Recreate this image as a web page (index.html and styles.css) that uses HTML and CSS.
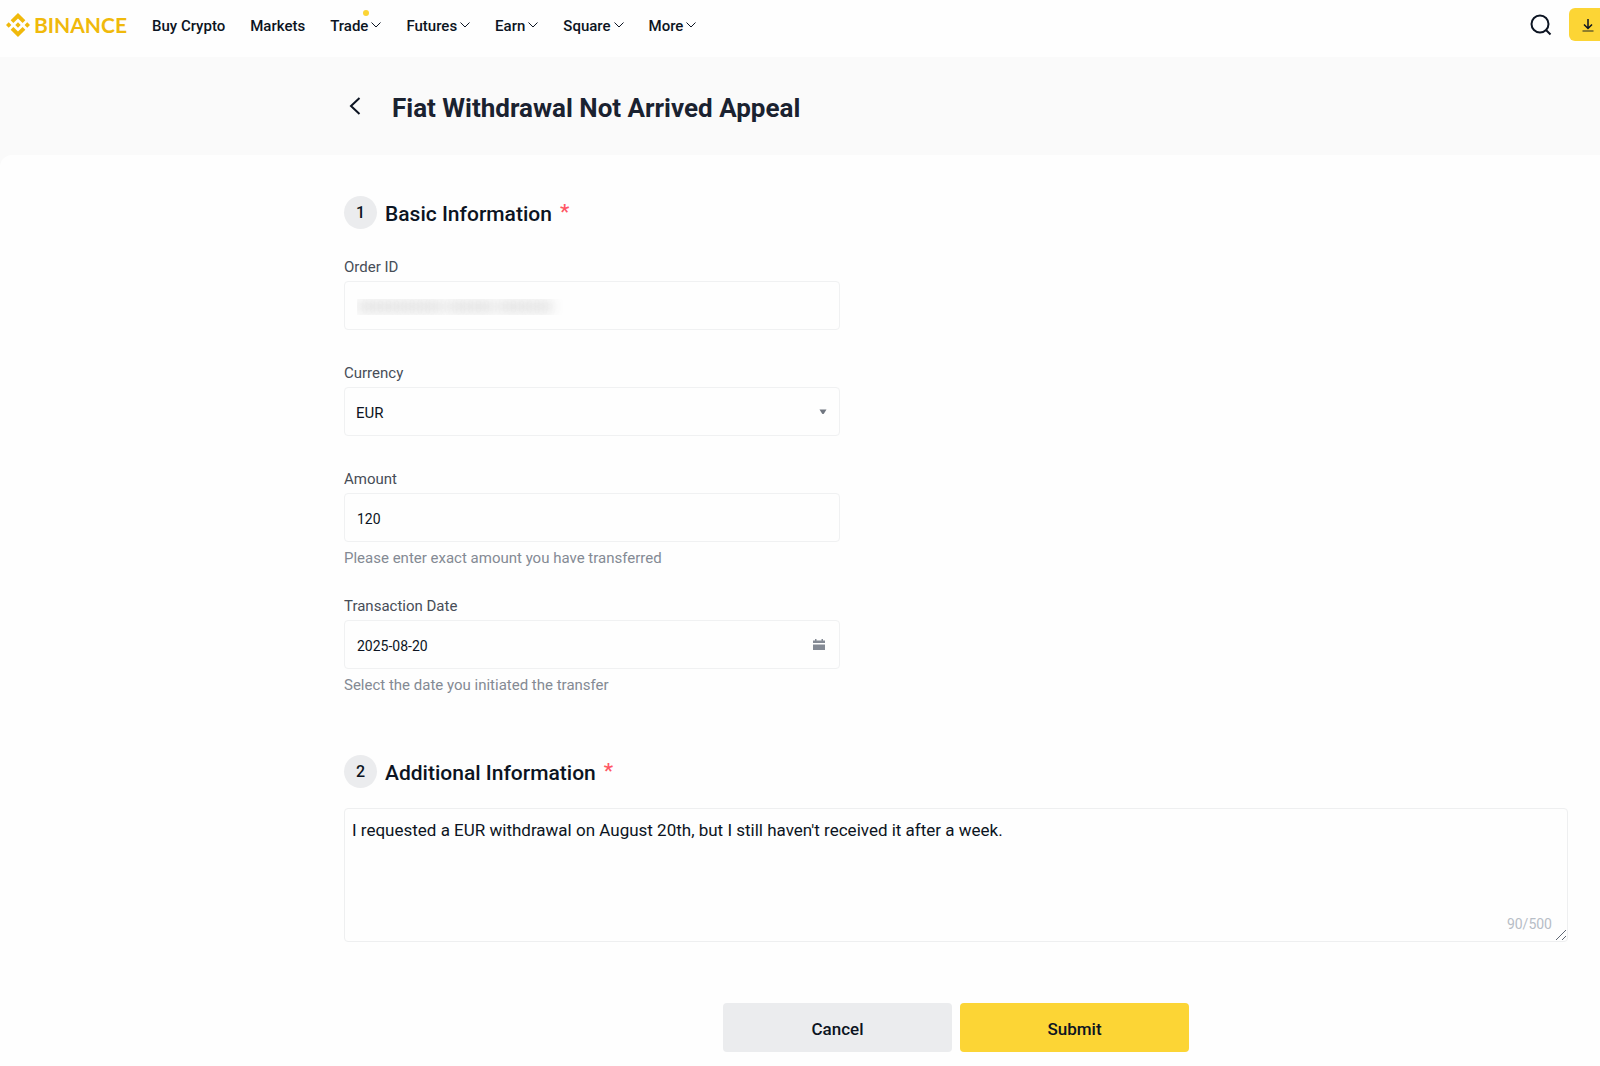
FILE: index.html
```
<!DOCTYPE html>
<html lang="en">
<head>
  <meta charset="UTF-8" />
  <meta name="viewport" content="width=device-width, initial-scale=1" />
  <title>Fiat Withdrawal Not Arrived Appeal | Binance</title>
  <link rel="stylesheet" href="styles.css">
</head>
<body>

<header class="header">
  <a class="logo" href="#">
    <svg class="logo-mark" viewBox="0 0 24 24" aria-hidden="true"><path fill="currentColor" d="M16.624 13.9202l2.7175 2.7154-7.353 7.353-7.353-7.352 2.7175-2.7164 4.6355 4.6595 4.6356-4.6595zm4.6366-4.6366L24 12l-2.7154 2.7164L18.5682 12l2.6924-2.7164zm-9.272.001l2.7163 2.6914-2.7164 2.7174v-.001L9.2721 12l2.7164-2.7154zm-9.2722-.001L5.4088 12l-2.6914 2.6924L0 12l2.7164-2.7164zM11.9885.0115l7.353 7.329-2.7174 2.7154-4.6356-4.6356-4.6355 4.6595-2.7174-2.7154 7.353-7.353z"/></svg>
    <span>BINANCE</span>
  </a>

  <nav class="nav">
    <a href="#">Buy Crypto</a>
    <a href="#">Markets</a>
    <a href="#" class="has-dot">Trade <svg class="chevron" viewBox="0 0 10 10"><path d="M0.5 1.5 5 6l4.500-4.500"/></svg></a>
    <a href="#">Futures <svg class="chevron" viewBox="0 0 10 10"><path d="M0.5 1.5 5 6l4.500-4.500"/></svg></a>
    <a href="#">Earn <svg class="chevron" viewBox="0 0 10 10"><path d="M0.5 1.5 5 6l4.500-4.500"/></svg></a>
    <a href="#">Square <svg class="chevron" viewBox="0 0 10 10"><path d="M0.5 1.5 5 6l4.500-4.500"/></svg></a>
    <a href="#">More <svg class="chevron" viewBox="0 0 10 10"><path d="M0.5 1.5 5 6l4.500-4.500"/></svg></a>
  </nav>

  <div class="header-actions">
    <button class="search-btn" type="button" aria-label="Search">
      <svg viewBox="0 0 22 22"><circle cx="10" cy="10" r="8.500"/><path d="M16 16l4.500 4.500"/></svg>
    </button>
    <button class="download-btn" type="button" aria-label="Download">
      <svg viewBox="0 0 16 16"><path d="M8 2v9M4 7.500l4 4 4-4"/><path class="tray" d="M2.500 14h11"/></svg>
    </button>
  </div>
</header>

<main class="page">
  <div class="title-bar">
    <button class="back-btn" type="button" aria-label="Back">
      <svg viewBox="0 0 12 18"><path d="M10.500 1 2 9l8.500 8"/></svg>
    </button>
    <h1>Fiat Withdrawal Not Arrived Appeal</h1>
  </div>

  <form class="card">
    <section class="basic">
      <h2><span class="step">1</span><span class="section-name">Basic Information</span> <span class="required">*</span></h2>

      <div class="field">
        <label for="orderId">Order ID</label>
        <input class="control masked" type="text" id="orderId" value="00000000000 000000 0000000" readonly />
      </div>

      <div class="field">
        <label for="currency">Currency</label>
        <div class="control-wrap">
          <select class="control" id="currency">
            <option>EUR</option>
          </select>
          <svg class="caret" viewBox="0 0 8 6"><path d="M0.500 0.500h7L5 4.500q-1 1-2 0z"/></svg>
        </div>
      </div>

      <div class="field">
        <label for="amount">Amount</label>
        <input class="control" type="text" id="amount" value="120" />
        <p class="hint">Please enter exact amount you have transferred</p>
      </div>

      <div class="field">
        <label for="date">Transaction Date</label>
        <div class="control-wrap">
          <input class="control" type="text" id="date" value="2025-08-20" />
          <svg class="calendar" viewBox="0 0 12 12"><path d="M0 1.500h2V0h1.500v1.500h5V0H10v1.500h2v2.500H0zM0 5.500h12V11H0z"/></svg>
        </div>
        <p class="hint">Select the date you initiated the transfer</p>
      </div>
    </section>

    <section class="additional">
      <h2><span class="step">2</span><label class="section-name" for="details">Additional Information</label> <span class="required">*</span></h2>
      <div class="textarea-wrap">
        <textarea id="details" maxlength="500">I requested a EUR withdrawal on August 20th, but I still haven't received it after a week.</textarea>
        <span class="counter">90/500</span>
        <svg class="grip" viewBox="0 0 12 12"><path d="M1 11 11 1M7 11l4-4"/></svg>
      </div>
    </section>

    <div class="actions">
      <button class="btn btn-cancel" type="button">Cancel</button>
      <button class="btn btn-submit" type="submit">Submit</button>
    </div>
  </form>
</main>

</body>
</html>
```
FILE: styles.css
```
* {
  box-sizing: border-box;
}

body {
  margin: 0;
  font-family: Roboto, "Liberation Sans", sans-serif;
  font-size: 15px;
  line-height: 20px;
  color: #0c1422;
  background: #fefefe;
}

button, input, select, textarea {
  font: inherit;
  color: inherit;
}

button {
  border: none;
  padding: 0;
  background: none;
  cursor: pointer;
}

a {
  color: inherit;
  text-decoration: none;
}

svg {
  display: block;
  flex: none;
  fill: none;
  stroke: currentColor;
}

/* header */

.header {
  display: flex;
  align-items: center;
  height: 57px;
  padding: 0 0 8px 6px;
}

.logo {
  display: flex;
  align-items: center;
  gap: 4px;
  width: 146px;
  color: #f0b90b;
  font-family: Lato, sans-serif;
  font-size: 21px;
  font-weight: 700;
}

.logo-mark {
  width: 24px;
  height: 24px;
  stroke: none;
}

.nav {
  display: flex;
  gap: 25px;
  padding-top: 2px;
  font-weight: 500;
}

.nav a {
  display: flex;
  align-items: center;
  gap: 3px;
  position: relative;
}

.chevron {
  width: 10px;
  height: 10px;
}

.has-dot::after {
  content: "";
  position: absolute;
  top: -6px;
  right: 12px;
  width: 6px;
  height: 6px;
  border-radius: 50%;
  background: #fcd535;
}

.header-actions {
  display: flex;
  align-items: center;
  gap: 17px;
  margin-left: auto;
}

.search-btn svg {
  width: 22px;
  height: 22px;
  stroke-width: 2;
}

.download-btn {
  width: 31px;
  height: 33px;
  padding-left: 11px;
  border-radius: 6px 0 0 6px;
  background: #fcd535;
}

.download-btn svg {
  width: 16px;
  height: 16px;
  stroke-width: 1.5;
}

.download-btn .tray {
  opacity: 0.6;
}

/* page */

.page {
  background: #fafafa;
}

.title-bar {
  display: flex;
  align-items: center;
  gap: 31px;
  height: 98px;
  padding: 0 32px 0 349px;
}

.back-btn svg {
  width: 12px;
  height: 18px;
  stroke-width: 2;
}

h1 {
  margin: 0;
  padding-top: 3px;
  font-size: 26px;
  font-weight: 700;
  line-height: 32px;
  color: #1a2230;
}

.card {
  padding: 41px 32px 14px 344px;
  border-radius: 12px 0 0 0;
  background: #fefefe;
}

h2 {
  display: flex;
  align-items: center;
  gap: 8px;
  margin: 0;
  font-size: 21px;
  font-weight: 500;
  line-height: 33px;
}

.step {
  width: 33px;
  height: 33px;
  border-radius: 50%;
  background: #ebecee;
  font-size: 16px;
  text-align: center;
}

.section-name {
  line-height: 29px;
  padding-top: 4px;
}

.required {
  color: #ff5765;
}

.basic {
  max-width: 496px;
}

.basic h2 {
  margin-bottom: 28px;
}

.field {
  margin-bottom: 33px;
}

.field label {
  display: block;
  margin-bottom: 4px;
  color: #474d57;
}

.control-wrap {
  position: relative;
}

.control {
  display: block;
  width: 100%;
  height: 49px;
  padding: 3px 12px 0;
  border: 1px solid #f0f1f2;
  border-radius: 4px;
  outline: none;
  background: #fefefe;
  font-size: 14px;
  appearance: none;
}

select.control {
  padding-left: 11px;
  font-size: 15px;
}

.masked {
  color: transparent;
  text-shadow: 0 0 12px rgba(60, 60, 60, 0.4);
}

.caret {
  position: absolute;
  top: 22px;
  right: 13px;
  width: 8px;
  height: 6px;
  fill: #707680;
  stroke: none;
  pointer-events: none;
}

.calendar {
  position: absolute;
  top: 19px;
  right: 15px;
  width: 12px;
  height: 12px;
  fill: #848a94;
  stroke: none;
}

.hint {
  margin: 6px 0 -5px;
  color: #848a94;
}

.additional {
  margin-top: 65px;
}

.additional h2 {
  margin-bottom: 20px;
}

.textarea-wrap {
  position: relative;
}

textarea {
  display: block;
  width: 100%;
  height: 134px;
  padding: 9px 7px;
  border: 1px solid #eeeff0;
  border-radius: 4px;
  outline: none;
  background: #fefefe;
  font-size: 17px;
  line-height: 24px;
  resize: none;
}

.counter {
  position: absolute;
  right: 16px;
  bottom: 8px;
  font-size: 14px;
  color: #b7bdc6;
}

.grip {
  position: absolute;
  right: 1px;
  bottom: 1px;
  width: 12px;
  height: 12px;
  color: #5e6673;
}

.actions {
  display: flex;
  justify-content: center;
  gap: 8px;
  margin-top: 61px;
}

.btn {
  width: 229px;
  height: 49px;
  padding-top: 2px;
  border-radius: 4px;
  font-size: 17px;
  font-weight: 500;
}

.btn-cancel {
  background: #ebecee;
}

.btn-submit {
  background: #fcd535;
}
```
